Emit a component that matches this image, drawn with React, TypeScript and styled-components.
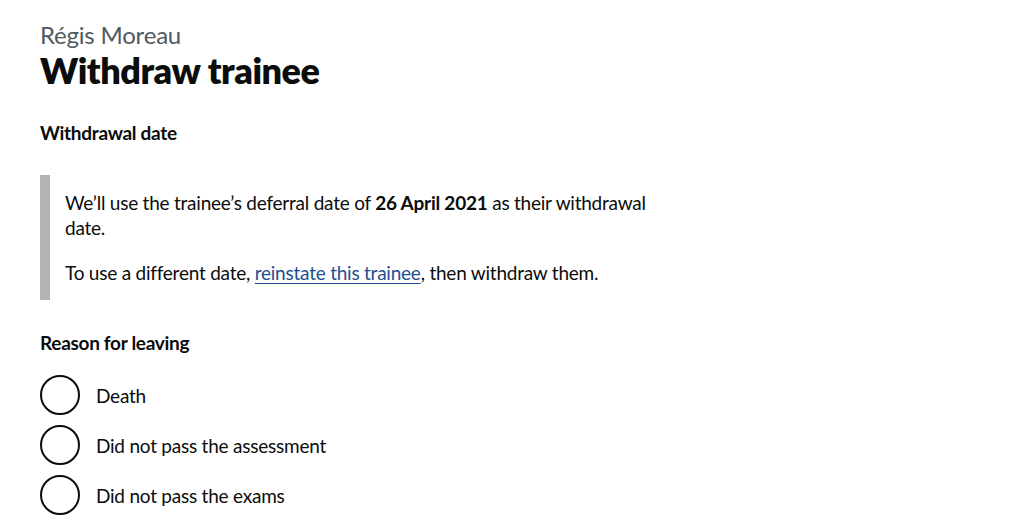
import React from "react";
import styled, { createGlobalStyle } from "styled-components";

const GlobalStyle = createGlobalStyle`
  html, body { margin: 0; padding: 0; background: #ffffff; }
  body {
    font-family: Lato, "Noto Sans", Arial, sans-serif;
    color: #0b0c0c;
  }
`;

const Main = styled.main`
  width: 640px;
  padding: 20px 0 0 40px;
`;

const Caption = styled.span`
  display: block;
  font-size: 24px;
  line-height: 30px;
  color: #505a5f;
  letter-spacing: -0.2px;
`;

const Heading = styled.h1`
  margin: 0 0 30px;
  font-size: 36px;
  line-height: 40px;
  font-weight: 800;
  letter-spacing: -0.45px;
`;

const FieldLabel = styled.h2`
  margin: 0 0 30px;
  font-size: 19px;
  line-height: 25px;
  font-weight: 700;
  letter-spacing: -0.3px;
`;

const Inset = styled.div`
  border-left: 10px solid #b1b4b6;
  padding: 15px;
  margin: 0 0 30px;
`;

const Body = styled.p`
  margin: 0 0 20px;
  font-size: 19px;
  line-height: 25px;
  letter-spacing: -0.23px;
  &:last-child { margin-bottom: 0; }
  strong { font-weight: 700; }
`;

const Link = styled.a`
  color: #1d4f91;
  text-decoration: underline;
  text-decoration-thickness: 1px;
  text-underline-offset: 3px;
`;

const Fieldset = styled.fieldset`
  border: 0;
  margin: 0;
  padding: 0;
  min-width: 0;
`;

const Legend = styled.legend`
  padding: 0;
  margin: 0 0 20px;
  font-size: 19px;
  line-height: 25px;
  font-weight: 700;
  letter-spacing: -0.3px;
`;

const RadioList = styled.div`
  display: flex;
  flex-direction: column;
  gap: 10px;
`;

const RadioItem = styled.label`
  display: flex;
  align-items: center;
  gap: 16px;
  height: 40px;
  cursor: pointer;
`;

const RadioInput = styled.input.attrs({ type: "radio" })`
  appearance: none;
  margin: 0;
  width: 40px;
  height: 40px;
  box-sizing: border-box;
  border: 2px solid #0b0c0c;
  border-radius: 50%;
  background: #fff;
  flex: none;
`;

const RadioText = styled.span`
  font-size: 19px;
  line-height: 25px;
  letter-spacing: -0.23px;
`;

const reasons = ["Death", "Did not pass the assessment", "Did not pass the exams"];

export default function App() {
  return (
    <Main>
      <GlobalStyle />
      <Caption>Régis Moreau</Caption>
      <Heading>Withdraw trainee</Heading>
      <FieldLabel>Withdrawal date</FieldLabel>
      <Inset>
        <Body>
          We’ll use the trainee’s deferral date of <strong>26 April 2021</strong> as their withdrawal date.
        </Body>
        <Body>
          To use a different date, <Link href="#">reinstate this trainee</Link>, then withdraw them.
        </Body>
      </Inset>
      <Fieldset>
        <Legend>Reason for leaving</Legend>
        <RadioList>
          {reasons.map((r) => (
            <RadioItem key={r}>
              <RadioInput name="reason" value={r} />
              <RadioText>{r}</RadioText>
            </RadioItem>
          ))}
        </RadioList>
      </Fieldset>
    </Main>
  );
}
